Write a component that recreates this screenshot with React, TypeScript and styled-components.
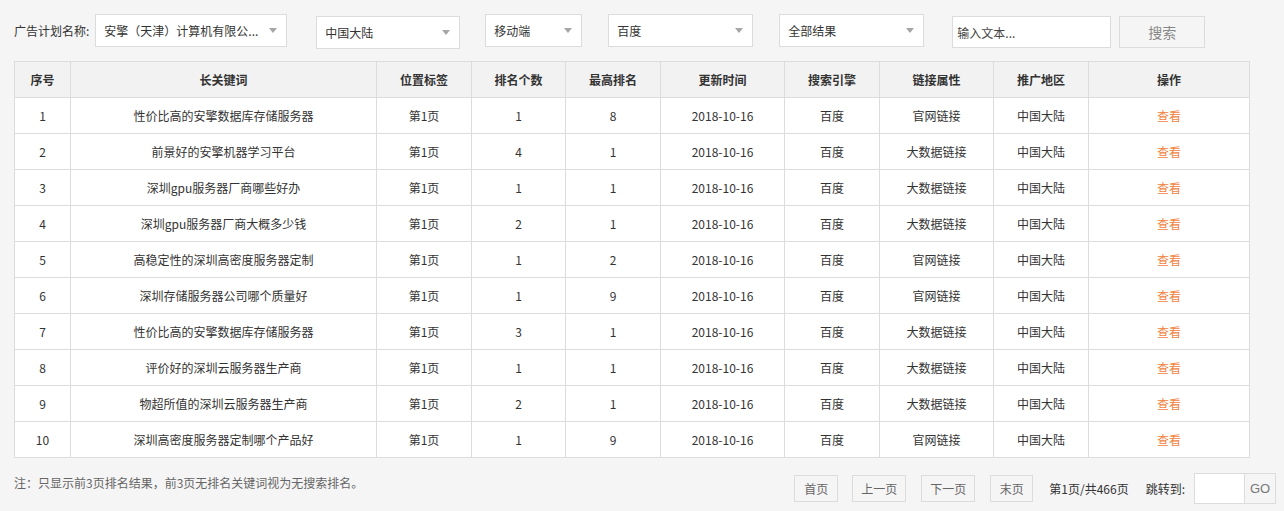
import React from 'react';
import styled, { createGlobalStyle } from 'styled-components';

const GlobalStyle = createGlobalStyle`
  body {
    margin: 0;
    background: #f5f5f5;
    font-family: 'Noto Sans CJK SC', 'Liberation Sans', sans-serif;
    font-size: 12px;
    color: #333;
  }
`;

type Row = {
  keyword: string;
  count: number;
  best: number;
  link: string;
};

const rows: Row[] = [
  { keyword: '性价比高的安擎数据库存储服务器', count: 1, best: 8, link: '官网链接' },
  { keyword: '前景好的安擎机器学习平台', count: 4, best: 1, link: '大数据链接' },
  { keyword: '深圳gpu服务器厂商哪些好办', count: 1, best: 1, link: '大数据链接' },
  { keyword: '深圳gpu服务器厂商大概多少钱', count: 2, best: 1, link: '大数据链接' },
  { keyword: '高稳定性的深圳高密度服务器定制', count: 1, best: 2, link: '官网链接' },
  { keyword: '深圳存储服务器公司哪个质量好', count: 1, best: 9, link: '官网链接' },
  { keyword: '性价比高的安擎数据库存储服务器', count: 3, best: 1, link: '大数据链接' },
  { keyword: '评价好的深圳云服务器生产商', count: 1, best: 1, link: '大数据链接' },
  { keyword: '物超所值的深圳云服务器生产商', count: 2, best: 1, link: '大数据链接' },
  { keyword: '深圳高密度服务器定制哪个产品好', count: 1, best: 9, link: '官网链接' },
];

const columns = [
  { title: '序号', width: 56 },
  { title: '长关键词', width: 306 },
  { title: '位置标签', width: 95 },
  { title: '排名个数', width: 94 },
  { title: '最高排名', width: 95 },
  { title: '更新时间', width: 124 },
  { title: '搜索引擎', width: 95 },
  { title: '链接属性', width: 114 },
  { title: '推广地区', width: 95 },
  { title: '操作', width: 161 },
];

const Page = styled.div`
  padding: 14px 14px 0 14px;
`;

const FilterBar = styled.div`
  display: flex;
  align-items: flex-start;
  height: 34px;
  margin-bottom: 13px;
`;

const Label = styled.span`
  line-height: 33px;
  margin-right: 6px;
  color: #333;
`;

const Select = styled.div<{ $w: number; $ml: number; $top?: number }>`
  position: relative;
  width: ${(p) => p.$w}px;
  height: 33px;
  margin-left: ${(p) => p.$ml}px;
  margin-top: ${(p) => p.$top ?? 0}px;
  box-sizing: border-box;
  background: #fff;
  border: 1px solid #dcdcdc;
  padding: 0 24px 0 8px;
  line-height: 31px;
  color: #333;
  white-space: nowrap;
  overflow: hidden;

  &::after {
    content: '';
    position: absolute;
    right: 9px;
    top: 13px;
    border-left: 4px solid transparent;
    border-right: 4px solid transparent;
    border-top: 5px solid #a6a6a6;
  }
`;

const TextInput = styled.input`
  width: 159px;
  height: 32px;
  margin-left: 28px;
  margin-top: 2px;
  box-sizing: border-box;
  border: 1px solid #dcdcdc;
  background: #fff;
  padding: 0 4px;
  font-family: inherit;
  font-size: 12px;
  outline: none;

  &::placeholder {
    color: #444;
  }
`;

const SearchButton = styled.button`
  width: 86px;
  height: 32px;
  margin-left: 8px;
  margin-top: 2px;
  box-sizing: border-box;
  border: 1px solid #dcdcdc;
  background: #f5f5f5;
  color: #888;
  font-family: inherit;
  font-size: 14px;
  cursor: pointer;
`;

const Table = styled.table`
  width: 1235px;
  border-collapse: collapse;
  table-layout: fixed;
  background: #fff;
`;

const Th = styled.th`
  height: 35px;
  background: #f2f2f2;
  border: 1px solid #dcdcdc;
  font-weight: bold;
  color: #333;
  text-align: center;
  padding: 0;
`;

const Td = styled.td`
  height: 35px;
  border: 1px solid #dcdcdc;
  text-align: center;
  color: #333;
  padding: 0;
`;

const ViewLink = styled.a`
  color: #f0833f;
  text-decoration: none;
  cursor: pointer;
`;

const Footer = styled.div`
  display: flex;
  align-items: flex-start;
  justify-content: space-between;
  padding-top: 15px;
  margin-right: -6px;
`;

const Note = styled.span`
  color: #666;
  margin-top: 1px;
`;

const Pager = styled.div`
  display: flex;
  align-items: center;
`;

const PageButton = styled.button<{ $w: number; $ml: number }>`
  width: ${(p) => p.$w}px;
  height: 27px;
  margin-left: ${(p) => p.$ml}px;
  box-sizing: border-box;
  border: 1px solid #dcdcdc;
  background: #f5f5f5;
  color: #666;
  font-family: inherit;
  font-size: 12px;
  padding: 0;
  cursor: pointer;
`;

const PageInfo = styled.span<{ $ml: number }>`
  margin-left: ${(p) => p.$ml}px;
  color: #333;
  font-size: 12px;
`;

const JumpBox = styled.div`
  display: flex;
  margin-left: 9px;
  height: 31px;
  border: 1px solid #dcdcdc;
  box-sizing: border-box;
`;

const JumpInput = styled.input`
  width: 49px;
  border: none;
  border-right: 1px solid #dcdcdc;
  background: #fff;
  outline: none;
  padding: 0;
`;

const GoButton = styled.button`
  width: 30px;
  border: none;
  background: #f5f5f5;
  color: #777;
  font-family: 'Liberation Sans', sans-serif;
  font-size: 13px;
  padding: 0;
  cursor: pointer;
`;

export default function App() {
  return (
    <Page>
      <GlobalStyle />
      <FilterBar>
        <Label>广告计划名称:</Label>
        <Select $w={192} $ml={0}>安擎（天津）计算机有限公...</Select>
        <Select $w={144} $ml={29} $top={2}>中国大陆</Select>
        <Select $w={97} $ml={25}>移动端</Select>
        <Select $w={145} $ml={26}>百度</Select>
        <Select $w={145} $ml={26}>全部结果</Select>
        <TextInput placeholder="输入文本..." />
        <SearchButton>搜索</SearchButton>
      </FilterBar>

      <Table>
        <colgroup>
          {columns.map((c) => (
            <col key={c.title} style={{ width: c.width }} />
          ))}
        </colgroup>
        <thead>
          <tr>
            {columns.map((c) => (
              <Th key={c.title}>{c.title}</Th>
            ))}
          </tr>
        </thead>
        <tbody>
          {rows.map((r, i) => (
            <tr key={i}>
              <Td>{i + 1}</Td>
              <Td>{r.keyword}</Td>
              <Td>第1页</Td>
              <Td>{r.count}</Td>
              <Td>{r.best}</Td>
              <Td>2018-10-16</Td>
              <Td>百度</Td>
              <Td>{r.link}</Td>
              <Td>中国大陆</Td>
              <Td>
                <ViewLink>查看</ViewLink>
              </Td>
            </tr>
          ))}
        </tbody>
      </Table>

      <Footer>
        <Note>注：只显示前3页排名结果，前3页无排名关键词视为无搜索排名。</Note>
        <Pager>
          <PageButton $w={44} $ml={0}>首页</PageButton>
          <PageButton $w={54} $ml={14}>上一页</PageButton>
          <PageButton $w={54} $ml={15}>下一页</PageButton>
          <PageButton $w={43} $ml={15}>末页</PageButton>
          <PageInfo $ml={16}>第1页/共466页</PageInfo>
          <PageInfo $ml={17}>跳转到:</PageInfo>
          <JumpBox>
            <JumpInput />
            <GoButton>GO</GoButton>
          </JumpBox>
        </Pager>
      </Footer>
    </Page>
  );
}
